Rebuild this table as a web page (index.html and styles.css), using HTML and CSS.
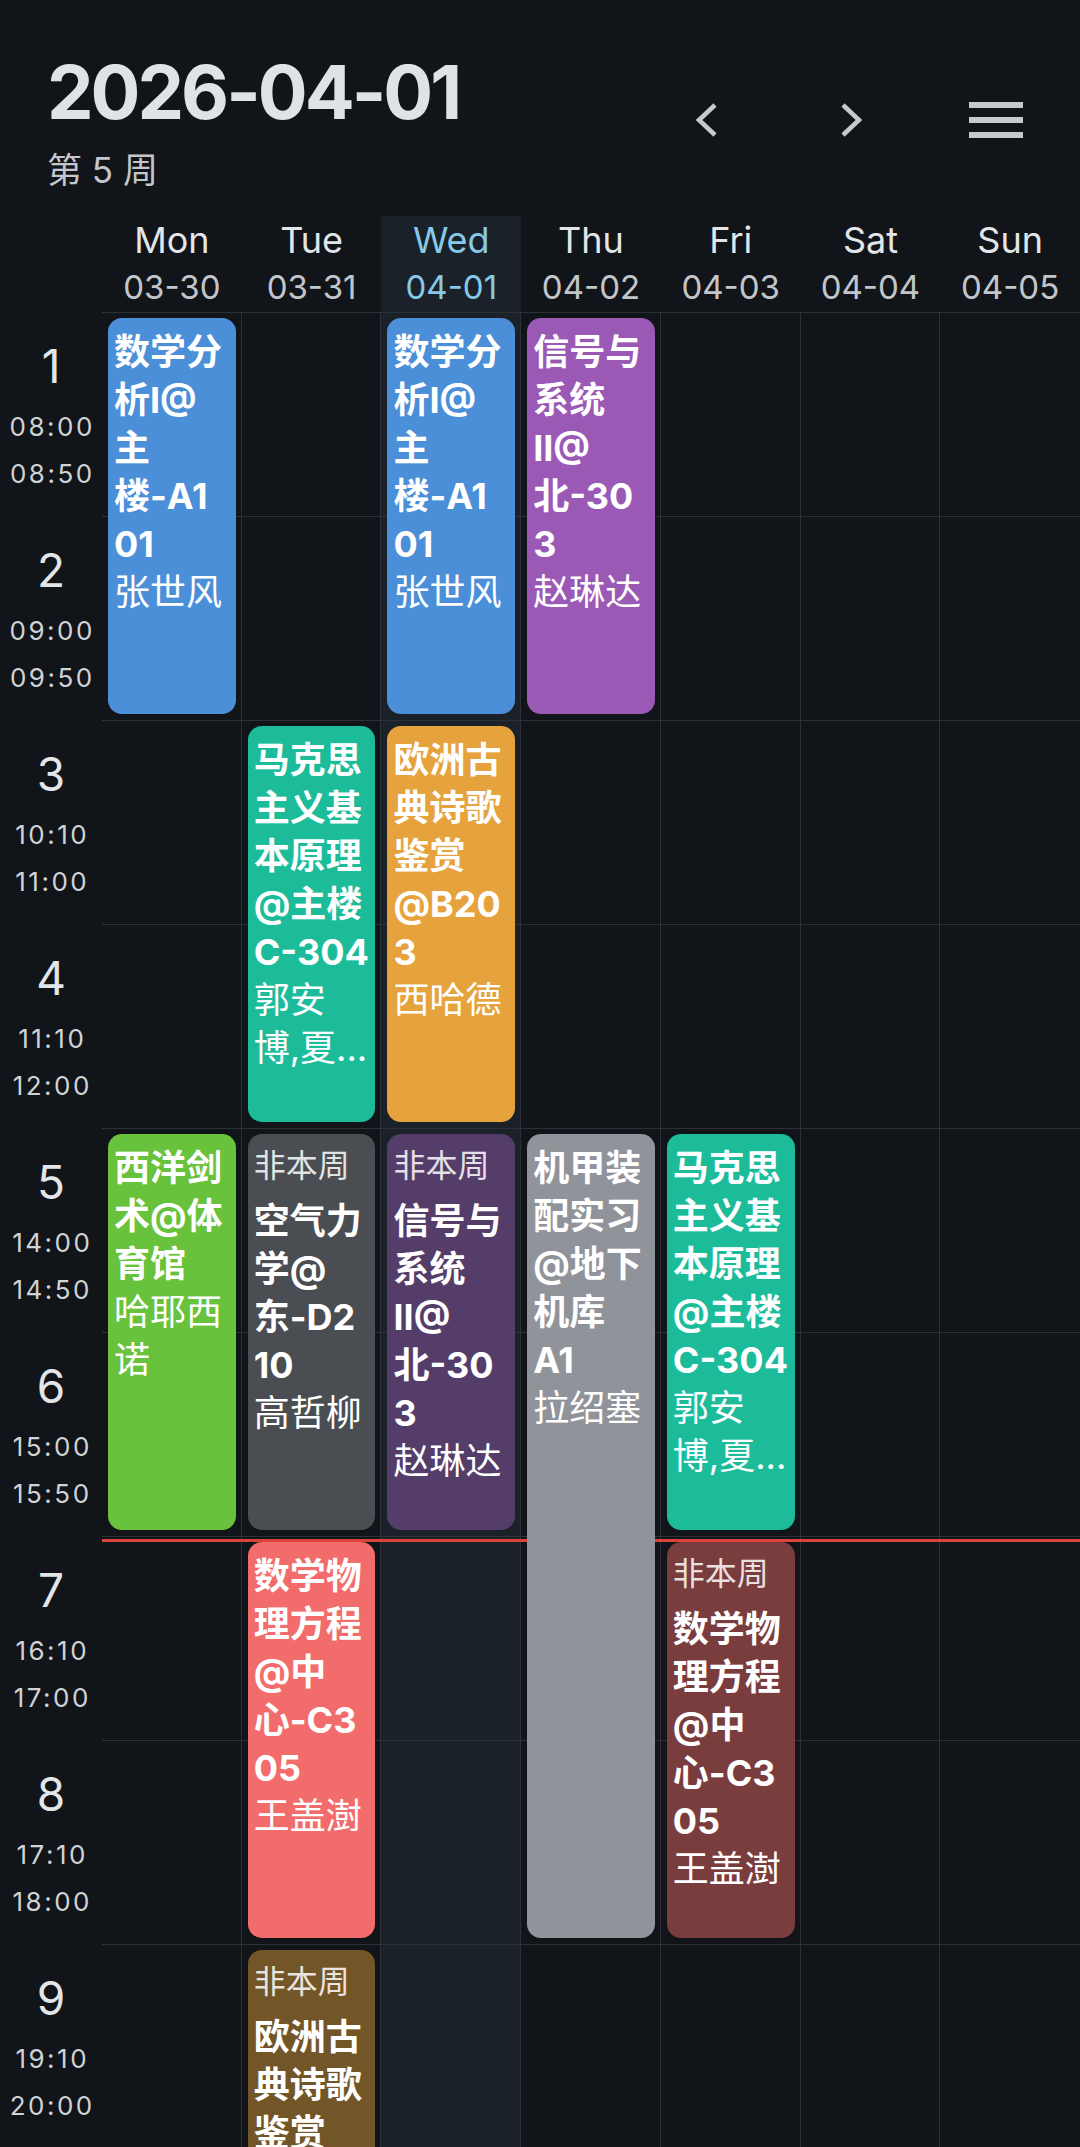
FILE: index.html
```html
<!DOCTYPE html>
<html lang="zh-CN">
<head>
<meta charset="utf-8">
<title>课表</title>
<link rel="stylesheet" href="styles.css">
</head>
<body>
<div class="app">
  <header class="topbar">
    <div class="heading">
      <div class="date-title">2026-04-01</div>
      <div class="week">第 5 周</div>
    </div>
    <nav class="nav">
      <svg class="nav-prev" width="22" height="34" viewBox="0 0 22 34"><path d="M20 2 L4 17 L20 32" fill="none" stroke="#c5cace" stroke-width="4.5"/></svg>
      <svg class="nav-next" width="22" height="34" viewBox="0 0 22 34"><path d="M2 2 L18 17 L2 32" fill="none" stroke="#c5cace" stroke-width="4.5"/></svg>
      <svg class="nav-menu" width="54" height="36" viewBox="0 0 54 36"><rect x="0" y="0" width="54" height="6" fill="#c5cace"/><rect x="0" y="15" width="54" height="6" fill="#c5cace"/><rect x="0" y="30" width="54" height="6" fill="#c5cace"/></svg>
    </nav>
  </header>

  <div class="days">
    <div class="corner"></div>
    <div class="day"><span class="day-name">Mon</span><span class="day-date">03-30</span></div>
    <div class="day"><span class="day-name">Tue</span><span class="day-date">03-31</span></div>
    <div class="day today"><span class="day-name">Wed</span><span class="day-date">04-01</span></div>
    <div class="day"><span class="day-name">Thu</span><span class="day-date">04-02</span></div>
    <div class="day"><span class="day-name">Fri</span><span class="day-date">04-03</span></div>
    <div class="day"><span class="day-name">Sat</span><span class="day-date">04-04</span></div>
    <div class="day"><span class="day-name">Sun</span><span class="day-date">04-05</span></div>
  </div>

  <div class="timetable">
    <div class="col c1"></div>
    <div class="col c2"></div>
    <div class="col c3 today"></div>
    <div class="col c4"></div>
    <div class="col c5"></div>
    <div class="col c6"></div>
    <div class="col c7 last"></div>

    <div class="hline r1"></div>
    <div class="hline r2"></div>
    <div class="hline r3"></div>
    <div class="hline r4"></div>
    <div class="hline r5"></div>
    <div class="hline r6"></div>
    <div class="hline r7"></div>
    <div class="hline r8"></div>
    <div class="hline r9"></div>

    <div class="slot r1"><div class="slot-no">1</div><div class="slot-time">08:00</div><div class="slot-time">08:50</div></div>
    <div class="slot r2"><div class="slot-no">2</div><div class="slot-time">09:00</div><div class="slot-time">09:50</div></div>
    <div class="slot r3"><div class="slot-no">3</div><div class="slot-time">10:10</div><div class="slot-time">11:00</div></div>
    <div class="slot r4"><div class="slot-no">4</div><div class="slot-time">11:10</div><div class="slot-time">12:00</div></div>
    <div class="slot r5"><div class="slot-no">5</div><div class="slot-time">14:00</div><div class="slot-time">14:50</div></div>
    <div class="slot r6"><div class="slot-no">6</div><div class="slot-time">15:00</div><div class="slot-time">15:50</div></div>
    <div class="slot r7"><div class="slot-no">7</div><div class="slot-time">16:10</div><div class="slot-time">17:00</div></div>
    <div class="slot r8"><div class="slot-no">8</div><div class="slot-time">17:10</div><div class="slot-time">18:00</div></div>
    <div class="slot r9"><div class="slot-no">9</div><div class="slot-time">19:10</div><div class="slot-time">20:00</div></div>

    <div class="now-line"></div>

    <div class="course blue r1 c1 s2">
      <div class="course-title">数学分<br>析I@<br>主<br>楼-A1<br>01</div>
      <div class="course-teacher">张世风</div>
    </div>
    <div class="course blue r1 c3 s2">
      <div class="course-title">数学分<br>析I@<br>主<br>楼-A1<br>01</div>
      <div class="course-teacher">张世风</div>
    </div>
    <div class="course purple r1 c4 s2">
      <div class="course-title">信号与<br>系统<br>II@<br>北-30<br>3</div>
      <div class="course-teacher">赵琳达</div>
    </div>

    <div class="course teal r3 c2 s2">
      <div class="course-title">马克思<br>主义基<br>本原理<br>@主楼<br>C-304</div>
      <div class="course-teacher">郭安<br>博,夏...</div>
    </div>
    <div class="course orange r3 c3 s2">
      <div class="course-title">欧洲古<br>典诗歌<br>鉴赏<br>@B20<br>3</div>
      <div class="course-teacher">西哈德</div>
    </div>

    <div class="course green r5 c1 s2">
      <div class="course-title">西洋剑<br>术@体<br>育馆</div>
      <div class="course-teacher">哈耶西<br>诺</div>
    </div>
    <div class="course dim-grey r5 c2 s2">
      <div class="course-tag">非本周</div>
      <div class="course-title">空气力<br>学@<br>东-D2<br>10</div>
      <div class="course-teacher">高哲柳</div>
    </div>
    <div class="course dim-purple r5 c3 s2">
      <div class="course-tag">非本周</div>
      <div class="course-title">信号与<br>系统<br>II@<br>北-30<br>3</div>
      <div class="course-teacher">赵琳达</div>
    </div>
    <div class="course grey r5 c4 s4">
      <div class="course-title">机甲装<br>配实习<br>@地下<br>机库<br>A1</div>
      <div class="course-teacher">拉绍塞</div>
    </div>
    <div class="course teal r5 c5 s2">
      <div class="course-title">马克思<br>主义基<br>本原理<br>@主楼<br>C-304</div>
      <div class="course-teacher">郭安<br>博,夏...</div>
    </div>

    <div class="course salmon r7 c2 s2">
      <div class="course-title">数学物<br>理方程<br>@中<br>心-C3<br>05</div>
      <div class="course-teacher">王盖澍</div>
    </div>
    <div class="course dim-red r7 c5 s2">
      <div class="course-tag">非本周</div>
      <div class="course-title">数学物<br>理方程<br>@中<br>心-C3<br>05</div>
      <div class="course-teacher">王盖澍</div>
    </div>

    <div class="course dim-brown r9 c2 s2">
      <div class="course-tag">非本周</div>
      <div class="course-title">欧洲古<br>典诗歌<br>鉴赏<br>@B20<br>3</div>
      <div class="course-teacher">西哈德</div>
    </div>
  </div>
</div>
</body>
</html>
```

FILE: styles.css
```css
html, body {
  margin: 0;
  padding: 0;
  background: #111418;
}

body {
  width: 1080px;
  height: 2147px;
  overflow: hidden;
  font-family: Inter, "Noto Sans CJK SC", sans-serif;
  color: #e2e5e8;
}

.app {
  width: 1080px;
}

/* ---------- top bar ---------- */
.topbar {
  display: flex;
  justify-content: space-between;
  align-items: flex-start;
  height: 216px;
  box-sizing: border-box;
  padding: 47px 57px 0 47px;
}

.date-title {
  font-size: 74px;
  font-weight: 700;
  line-height: 90px;
  letter-spacing: -3px;
  color: #dfe3e6;
}

.week {
  margin-top: 11px;
  font-size: 35px;
  line-height: 44px;
  color: #c3c7cb;
}

.nav {
  display: flex;
  align-items: center;
  margin-top: 55px;
}

.nav-prev {
  margin-right: 124px;
}

.nav-next {
  margin-right: 106px;
}

/* ---------- day header ---------- */
.days {
  display: grid;
  grid-template-columns: 102px repeat(7, 1fr);
  height: 96px;
}

.day {
  display: flex;
  flex-direction: column;
  align-items: center;
  justify-content: center;
}

.day-name {
  font-size: 36px;
  line-height: 47px;
  color: #e3e6e9;
}

.day-date {
  font-size: 33px;
  line-height: 47px;
  color: #c2c6ca;
}

.day.today {
  background: #1b2128;
}

.day.today .day-name,
.day.today .day-date {
  color: #86c9e8;
}

/* ---------- timetable grid ---------- */
.timetable {
  display: grid;
  grid-template-columns: 102px repeat(7, 1fr);
  grid-template-rows: repeat(9, 204px);
  grid-auto-rows: 204px;
}

.col {
  grid-row: 1 / -1;
  border-right: 1px solid #2c3137;
}

.col.today {
  background: #1b2128;
}

.col.last {
  border-right: none;
}

.hline {
  grid-column: 2 / -1;
  border-top: 1px solid #2c3137;
}

.c1 { grid-column-start: 2; }
.c2 { grid-column-start: 3; }
.c3 { grid-column-start: 4; }
.c4 { grid-column-start: 5; }
.c5 { grid-column-start: 6; }
.c6 { grid-column-start: 7; }
.c7 { grid-column-start: 8; }

.r1 { grid-row-start: 1; }
.r2 { grid-row-start: 2; }
.r3 { grid-row-start: 3; }
.r4 { grid-row-start: 4; }
.r5 { grid-row-start: 5; }
.r6 { grid-row-start: 6; }
.r7 { grid-row-start: 7; }
.r8 { grid-row-start: 8; }
.r9 { grid-row-start: 9; }

.s2 { grid-row-end: span 2; }
.s4 { grid-row-end: span 4; }

/* time slots */
.slot {
  grid-column: 1;
  display: flex;
  flex-direction: column;
  align-items: center;
  justify-content: center;
  padding-top: 6px;
}

.slot-no {
  font-size: 46px;
  line-height: 58px;
  margin-bottom: 8px;
  color: #e3e6e9;
}

.slot-time {
  font-size: 26px;
  line-height: 47px;
  letter-spacing: 2.5px;
  padding-left: 2.5px;
  color: #cfd3d6;
}

/* current time line */
.now-line {
  grid-row: 7;
  grid-column: 2 / -1;
  align-self: start;
  margin-top: 3px;
  height: 3px;
  background: #dc433d;
}

/* ---------- course blocks ---------- */
.course {
  margin: 6px;
  padding: 10px 5px 0 6px;
  border-radius: 14px;
  color: #ffffff;
  white-space: nowrap;
  overflow: hidden;
  min-width: 0;
}

.course-title {
  font-size: 36px;
  font-weight: 700;
  line-height: 48px;
}

.course-teacher {
  font-size: 36px;
  font-weight: 400;
  line-height: 48px;
}

.course-tag {
  font-size: 32px;
  line-height: 44px;
  margin-bottom: 9px;
  color: rgba(255, 255, 255, 0.85);
}

.blue { background: #4a8fd8; }
.purple { background: #9b59b6; }
.teal { background: #1cbc9b; }
.orange { background: #e6a33d; }
.green { background: #68c23b; }
.grey { background: #909399; }
.salmon { background: #f36c6c; }
.dim-grey { background: #4a4d52; }
.dim-purple { background: #553d6a; }
.dim-red { background: #7a3d3e; }
.dim-brown { background: #735628; }
```
